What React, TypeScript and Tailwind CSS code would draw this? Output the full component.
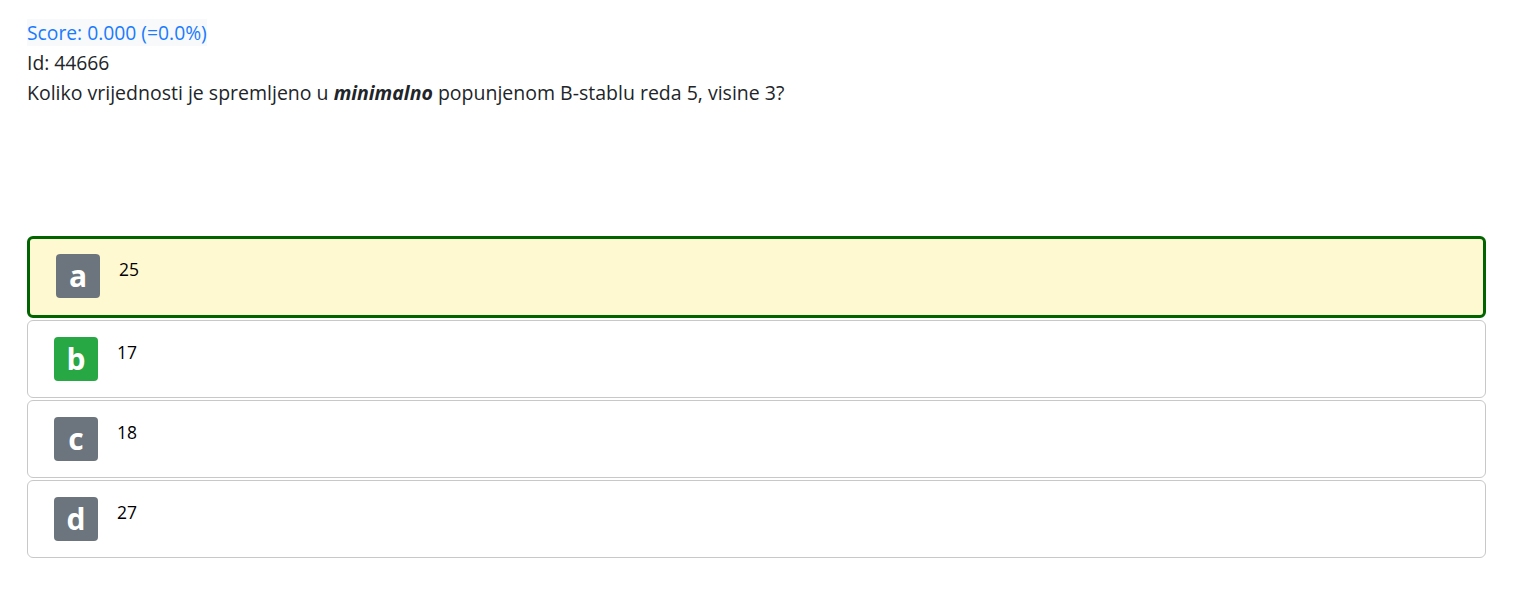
import React from "react";

const options = [
  { letter: "a", text: "25", selected: true, correct: false },
  { letter: "b", text: "17", selected: false, correct: true },
  { letter: "c", text: "18", selected: false, correct: false },
  { letter: "d", text: "27", selected: false, correct: false },
];

export default function App() {
  return (
    <div
      className="min-h-screen bg-white px-[27px] pt-[18px] text-[#212529]"
      style={{ fontFamily: "'Open Sans', 'Noto Sans', sans-serif" }}
    >
      <div className="text-[19.3px] leading-[30px]">
        <div>
          <span className="bg-[#f8f9fa] text-[#1a7bff]">Score: 0.000 (=0.0%)</span>
        </div>
        <div>Id: 44666</div>
        <div className="text-[19.5px]">
          Koliko vrijednosti je spremljeno u <b><i>minimalno</i></b> popunjenom B-stablu reda 5, visine 3?
        </div>
      </div>
      <div className="mt-[128px] flex w-[1459px] flex-col gap-[2px]">
        {options.map((o) => (
          <div
            key={o.letter}
            className={
              o.selected
                ? "flex h-[82px] items-start rounded-[6px] border-[3px] border-[#006400] bg-[#fff9d1] pl-[26px] pt-[15px]"
                : "flex h-[78px] items-start rounded-[6px] border border-[#c8c8c8] bg-white pl-[26px] pt-[16px]"
            }
          >
            <div
              className={
                (o.correct ? "bg-[#28a745]" : "bg-[#6c757d]") +
                " flex h-[44px] w-[44px] items-center justify-center rounded-[4px] text-[30px] font-bold leading-none text-white"
              }
            >
              {o.letter}
            </div>
            <div className="ml-[19px] pt-[3px] text-[17.5px] leading-[24px] text-black">{o.text}</div>
          </div>
        ))}
      </div>
    </div>
  );
}
